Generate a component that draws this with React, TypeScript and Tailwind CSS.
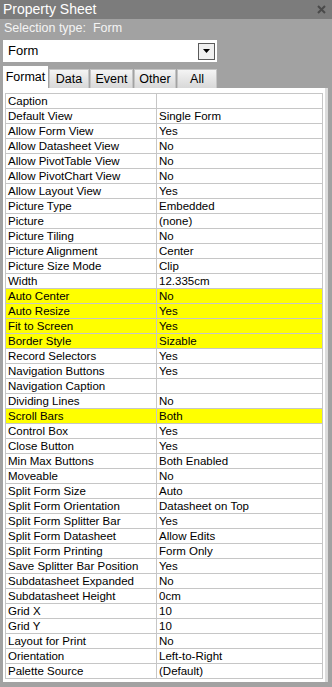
const rows: [string, string, boolean?][] = [
  ['Caption', ''],
  ['Default View', 'Single Form'],
  ['Allow Form View', 'Yes'],
  ['Allow Datasheet View', 'No'],
  ['Allow PivotTable View', 'No'],
  ['Allow PivotChart View', 'No'],
  ['Allow Layout View', 'Yes'],
  ['Picture Type', 'Embedded'],
  ['Picture', '(none)'],
  ['Picture Tiling', 'No'],
  ['Picture Alignment', 'Center'],
  ['Picture Size Mode', 'Clip'],
  ['Width', '12.335cm'],
  ['Auto Center', 'No', true],
  ['Auto Resize', 'Yes', true],
  ['Fit to Screen', 'Yes', true],
  ['Border Style', 'Sizable', true],
  ['Record Selectors', 'Yes'],
  ['Navigation Buttons', 'Yes'],
  ['Navigation Caption', ''],
  ['Dividing Lines', 'No'],
  ['Scroll Bars', 'Both', true],
  ['Control Box', 'Yes'],
  ['Close Button', 'Yes'],
  ['Min Max Buttons', 'Both Enabled'],
  ['Moveable', 'No'],
  ['Split Form Size', 'Auto'],
  ['Split Form Orientation', 'Datasheet on Top'],
  ['Split Form Splitter Bar', 'Yes'],
  ['Split Form Datasheet', 'Allow Edits'],
  ['Split Form Printing', 'Form Only'],
  ['Save Splitter Bar Position', 'Yes'],
  ['Subdatasheet Expanded', 'No'],
  ['Subdatasheet Height', '0cm'],
  ['Grid X', '10'],
  ['Grid Y', '10'],
  ['Layout for Print', 'No'],
  ['Orientation', 'Left-to-Right'],
  ['Palette Source', '(Default)'],
]

const tabs: [string, string][] = [
  ['Data', 'w-[40px]'],
  ['Event', 'w-[43px]'],
  ['Other', 'w-[42px]'],
  ['All', 'w-[40px]'],
]

export default function App() {
  return (
    <div className="w-[332px] h-[687px] bg-[#a2a2a2] font-['Liberation_Sans',sans-serif] text-[12px] overflow-hidden">
      {/* Title bar */}
      <div className="h-[19px] bg-[#7c7c7c] flex items-center justify-between pl-[3px] pr-[6px]">
        <span className="text-white text-[14px]">Property Sheet</span>
        <svg width="9" height="9" viewBox="0 0 9 9">
          <path d="M1 1 L8 8 M8 1 L1 8" stroke="#4a4a4a" strokeWidth="2" />
        </svg>
      </div>

      {/* Selection type */}
      <div className="h-[19px] flex items-center pl-[4px] text-[12.5px] text-[#f4f4f4]">
        Selection type:&nbsp;&nbsp;Form
      </div>

      {/* Dropdown */}
      <div className="ml-[3px] mt-[2px] w-[214px] h-[22px] bg-white flex items-center justify-between pl-[5px] pr-[2px]">
        <span className="text-black text-[13px]">Form</span>
        <div className="w-[17px] h-[17px] border border-[#5a5a5a] bg-[#f0f0f0] flex items-center justify-center">
          <svg width="7" height="4" viewBox="0 0 7 4">
            <path d="M0 0 L7 0 L3.5 4 Z" fill="#000" />
          </svg>
        </div>
      </div>

      {/* Tabs */}
      <div className="flex items-end ml-[3px] mt-[4px] h-[22px] gap-px">
        <div className="w-[45px] h-[22px] bg-white flex items-center justify-center text-[12.5px] text-black">
          Format
        </div>
        {tabs.map(([t, w]) => (
          <div
            key={t}
            className={`${w} h-[19px] bg-gradient-to-b from-[#f4f4f4] to-[#d8d8d8] border border-b-0 border-[#c4c4c4] flex items-center justify-center text-[12.5px] text-black`}
          >
            {t}
          </div>
        ))}
      </div>

      {/* Property grid panel */}
      <div className="ml-[3px] w-[325px] bg-white border-r-[3px] border-r-[#dcdcdc] pl-[2px] pr-[2px] pt-[5px] pb-[3px]">
        <div className="border-t border-l border-r border-[#c6c6c6]">
          {rows.map(([label, value, hl]) => (
            <div
              key={label}
              className={`flex h-[15px] border-b border-[#c6c6c6] text-black leading-[14px] ${hl ? 'bg-[#ffff00]' : 'bg-white'}`}
            >
              <div className="w-[151px] pl-[2px] text-[11.5px] border-r border-[#c6c6c6] whitespace-nowrap overflow-hidden">
                {label}
              </div>
              <div className="flex-1 pl-[2px] text-[11.5px] whitespace-nowrap overflow-hidden">{value}</div>
            </div>
          ))}
        </div>
      </div>
    </div>
  )
}
